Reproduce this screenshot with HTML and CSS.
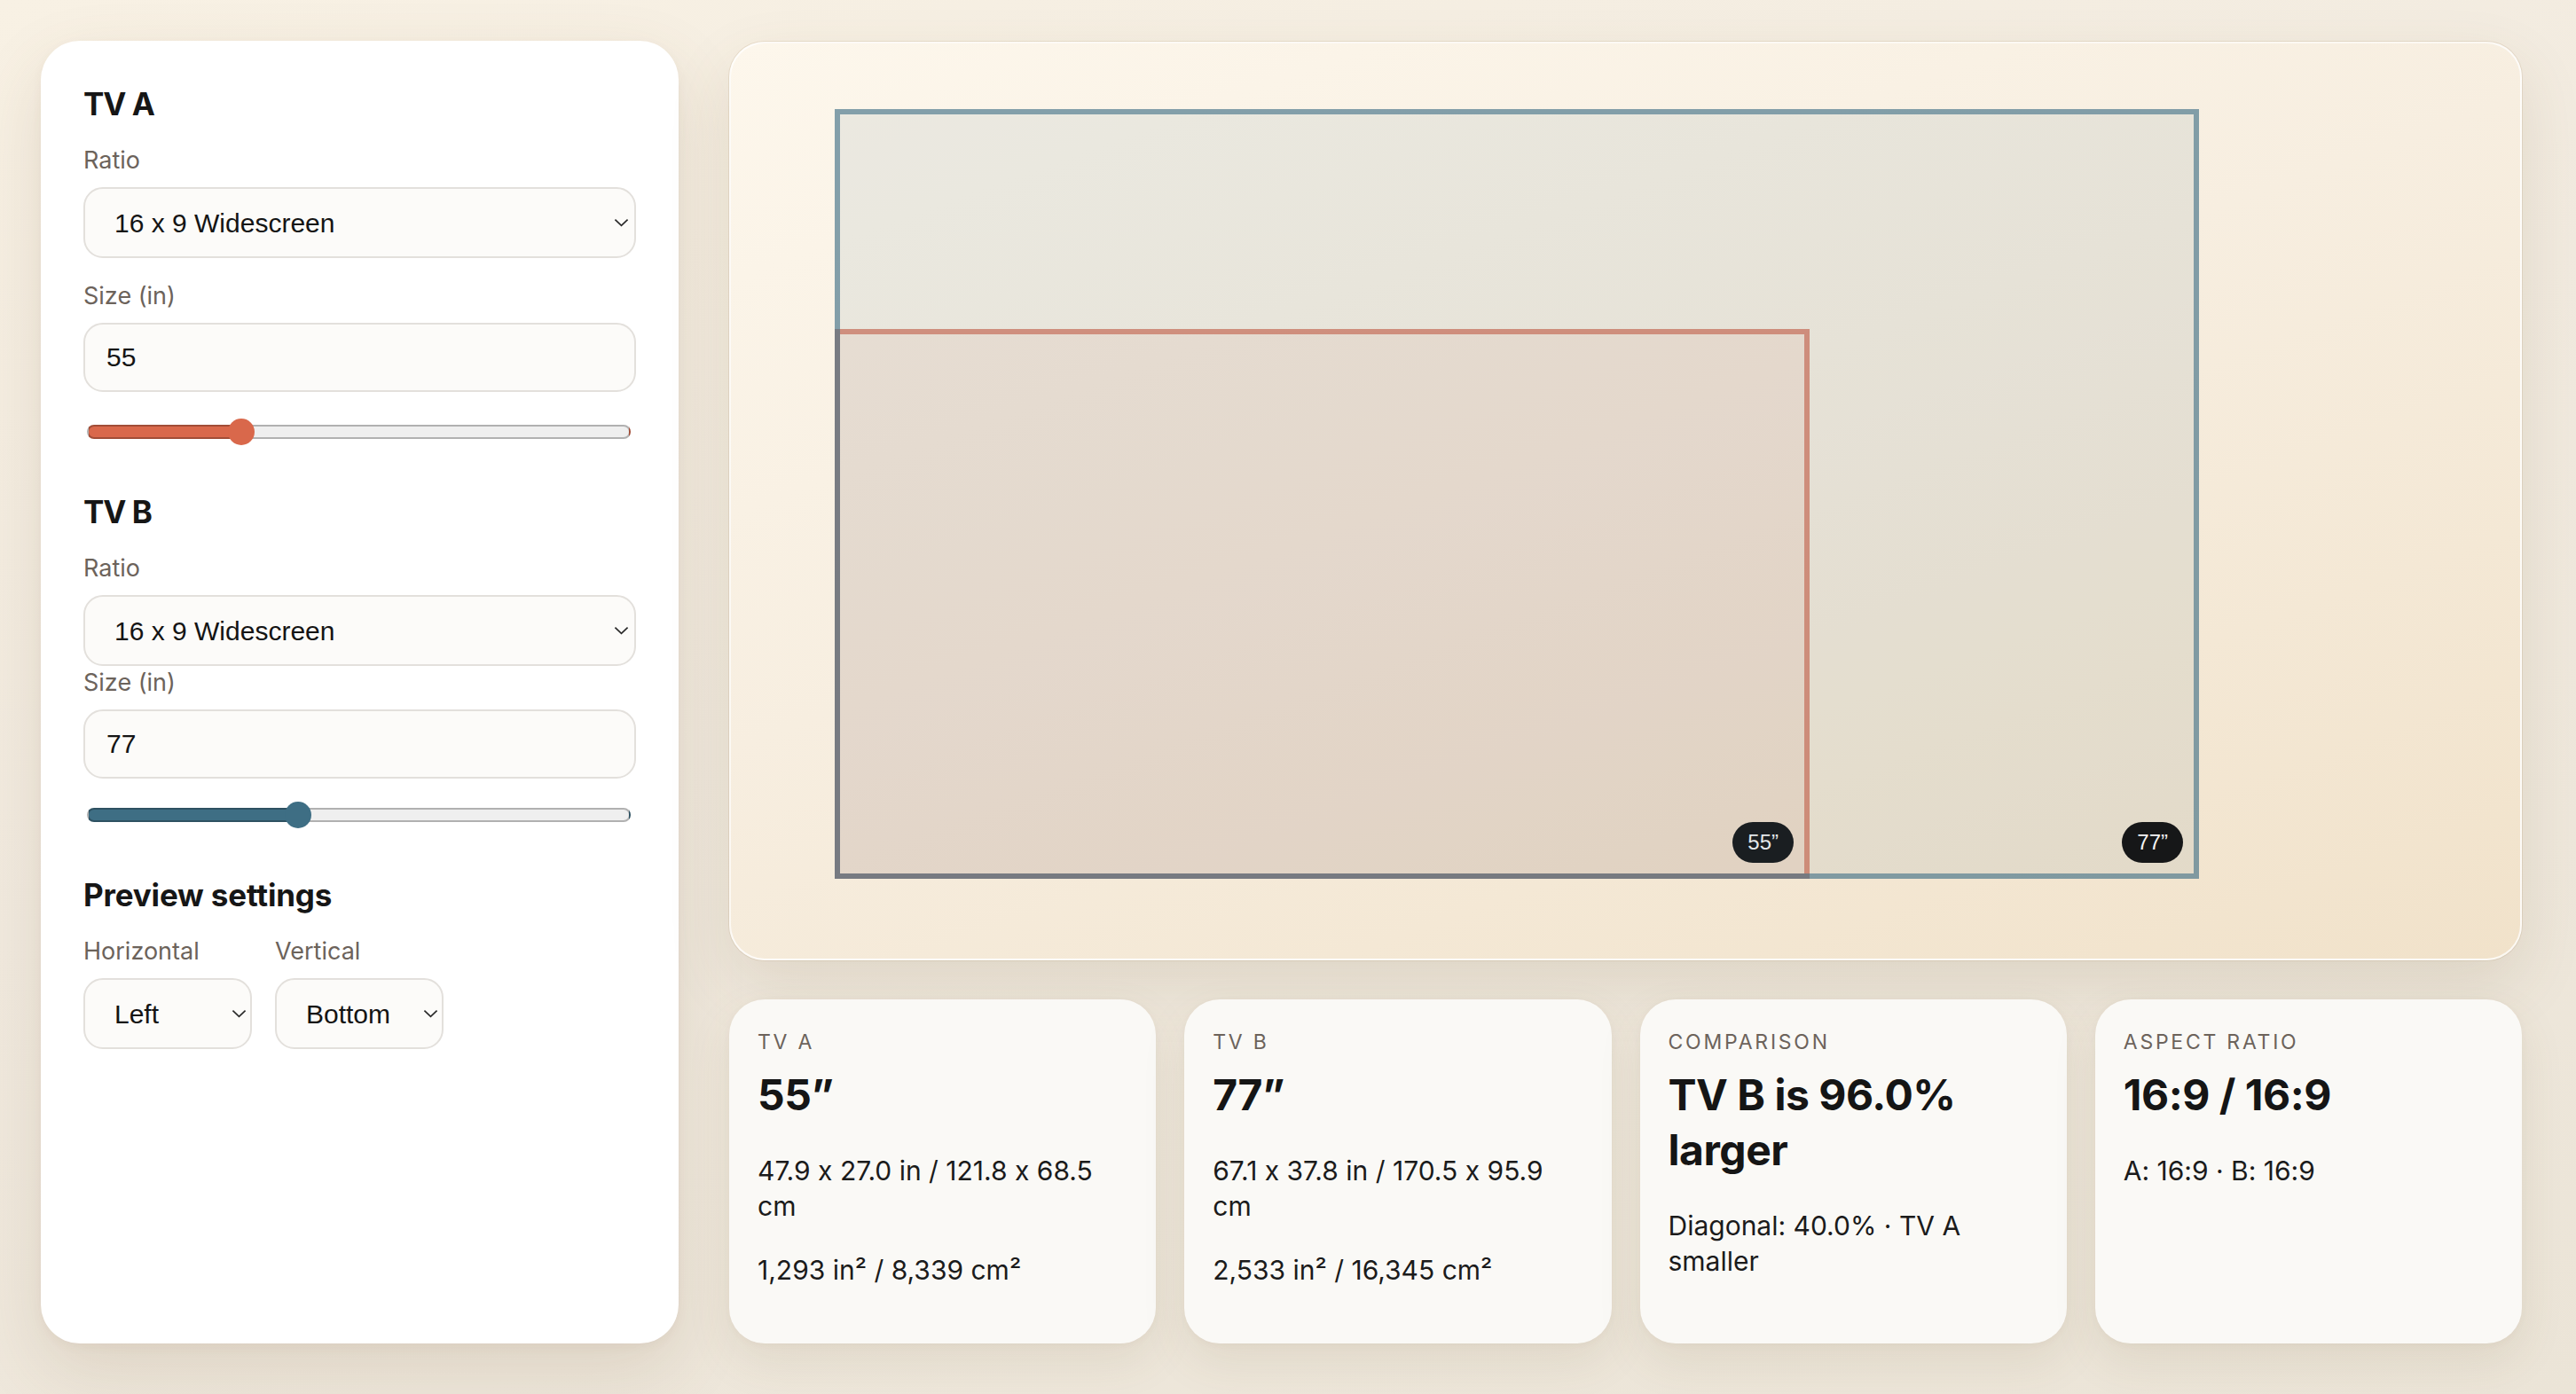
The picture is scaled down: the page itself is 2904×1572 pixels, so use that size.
FILE: index.html
```html
<!DOCTYPE html>
<html lang="en">
<head>
<meta charset="utf-8">
<title>TV Size Comparison</title>
<link rel="stylesheet" href="styles.css">
</head>
<body>
<aside class="panel">
  <h2 class="panel-title">TV A</h2>
  <label class="field-label">Ratio</label>
  <div class="select-wrap">
    <select class="control select"><option>16 x 9 Widescreen</option></select>
    <svg class="chev" viewBox="0 0 18 10" width="18" height="10"><polyline points="1.5,1.5 9,8.5 16.5,1.5" fill="none" stroke="#2a2a2a" stroke-width="1.8"/></svg>
  </div>
  <label class="field-label gap-lg">Size (in)</label>
  <input class="control text" type="text" value="55">
  <input class="range range-a" type="range" min="1" max="200" value="55" style="--p: 28.2%">

  <h2 class="panel-title section">TV B</h2>
  <label class="field-label">Ratio</label>
  <div class="select-wrap">
    <select class="control select"><option>16 x 9 Widescreen</option></select>
    <svg class="chev" viewBox="0 0 18 10" width="18" height="10"><polyline points="1.5,1.5 9,8.5 16.5,1.5" fill="none" stroke="#2a2a2a" stroke-width="1.8"/></svg>
  </div>
  <label class="field-label gap-sm">Size (in)</label>
  <input class="control text" type="text" value="77">
  <input class="range range-b" type="range" min="1" max="200" value="77" style="--p: 38.8%">

  <h3 class="panel-title sub section">Preview settings</h3>
  <div class="pair">
    <div class="pair-col">
      <label class="field-label">Horizontal</label>
      <div class="select-wrap">
        <select class="control select"><option>Left</option></select>
        <svg class="chev" viewBox="0 0 18 10" width="18" height="10"><polyline points="1.5,1.5 9,8.5 16.5,1.5" fill="none" stroke="#2a2a2a" stroke-width="1.8"/></svg>
      </div>
    </div>
    <div class="pair-col">
      <label class="field-label">Vertical</label>
      <div class="select-wrap">
        <select class="control select"><option>Bottom</option></select>
        <svg class="chev" viewBox="0 0 18 10" width="18" height="10"><polyline points="1.5,1.5 9,8.5 16.5,1.5" fill="none" stroke="#2a2a2a" stroke-width="1.8"/></svg>
      </div>
    </div>
  </div>
</aside>

<main class="main">
  <section class="preview">
    <div class="stage">
      <div class="screen screen-a"><span class="badge">55”</span></div>
      <div class="screen screen-b"><span class="badge">77”</span></div>
    </div>
  </section>

  <section class="stats">
    <div class="card">
      <div class="card-label">TV A</div>
      <div class="card-big">55”</div>
      <p class="card-text">47.9 x 27.0 in / 121.8 x 68.5 cm</p>
      <p class="card-text">1,293 in² / 8,339 cm²</p>
    </div>
    <div class="card">
      <div class="card-label">TV B</div>
      <div class="card-big">77”</div>
      <p class="card-text">67.1 x 37.8 in / 170.5 x 95.9 cm</p>
      <p class="card-text">2,533 in² / 16,345 cm²</p>
    </div>
    <div class="card">
      <div class="card-label">Comparison</div>
      <div class="card-big">TV B is 96.0% larger</div>
      <p class="card-text">Diagonal: 40.0% · TV A smaller</p>
    </div>
    <div class="card">
      <div class="card-label">Aspect ratio</div>
      <div class="card-big">16:9 / 16:9</div>
      <p class="card-text">A: 16:9 · B: 16:9</p>
    </div>
  </section>
</main>
</body>
</html>
```

FILE: styles.css
```css
* { box-sizing: border-box; }

html, body { height: 100%; }

body {
  margin: 0;
  height: 1572px;
  padding: 46px 61px 57px 46px;
  display: grid;
  grid-template-columns: 719px 1fr;
  gap: 57px;
  font-family: "Inter", "Noto Sans", sans-serif;
  font-feature-settings: "calt" 0;
  color: #171717;
  background: linear-gradient(165deg, #f8f1e4 0%, #f1eadf 45%, #ebe4d7 100%);
  overflow: hidden;
}

/* ---------- left panel ---------- */
.panel {
  background: #ffffff;
  border-radius: 44px;
  padding: 50px 48px 48px 48px;
  display: flex;
  flex-direction: column;
  box-shadow: 0 30px 80px rgba(110, 85, 50, 0.14), 0 4px 12px rgba(110, 85, 50, 0.05);
}

.panel-title {
  margin: 0;
  font-size: 35px;
  line-height: 42px;
  font-weight: 700;
  letter-spacing: -0.03em;
  color: #161616;
}
.panel-title.sub {
  font-size: 35px;
  letter-spacing: -0.005em;
}
.panel-title.section { margin-top: 54px; }

.field-label {
  display: block;
  margin-top: 26px;
  margin-bottom: 13px;
  font-size: 27px;
  line-height: 34px;
  color: #6c635b;
}
.field-label.gap-sm { margin-top: 2px; }

.select-wrap { position: relative; }

.control {
  display: block;
  width: 100%;
  margin: 0;
  font-family: "Liberation Sans", Arial, sans-serif;
  font-size: 30px;
  color: #141414;
  background: #fcfbf9;
  border: 2px solid #e3e0dc;
  border-radius: 22px;
  outline: none;
}

.select {
  -webkit-appearance: none;
  appearance: none;
  height: 80px;
  padding: 0 40px 0 33px;
}

.text {
  height: 78px;
  padding: 0 24px;
}

.chev {
  position: absolute;
  right: 8px;
  top: 50%;
  width: 17px;
  height: 10px;
  margin-top: -5px;
  pointer-events: none;
}

/* ---------- range sliders ---------- */
.range {
  -webkit-appearance: none;
  appearance: none;
  display: block;
  width: calc(100% - 10px);
  height: 30px;
  margin: 30px 5px 0 4px;
  padding: 0;
  background: transparent;
}
.range-b { margin-top: 26px; }

.range::-webkit-slider-runnable-track {
  box-sizing: border-box;
  height: 16px;
  border-radius: 8px;
  border: 2px solid rgba(0, 0, 0, 0.26);
  background: linear-gradient(to right, var(--c) 0, var(--c) var(--p), #efefef var(--p), #efefef 100%);
}
.range::-webkit-slider-thumb {
  -webkit-appearance: none;
  appearance: none;
  width: 30px;
  height: 30px;
  margin-top: -9px;
  border-radius: 50%;
  border: none;
  background: var(--c);
}
.range-a { --c: #d9684b; }
.range-b { --c: #3e6e84; }

.pair {
  display: flex;
  gap: 26px;
}
.pair-col { width: 190px; }
.pair .select { padding-right: 30px; }
.pair .chev { right: 6px; }

/* ---------- right side ---------- */
.main {
  display: flex;
  flex-direction: column;
  gap: 44px;
  min-width: 0;
}

.preview {
  flex: 1;
  margin-top: 1px;
  border-radius: 40px;
  border: 2px solid rgba(255, 255, 255, 0.75);
  background: linear-gradient(160deg, #fdf7ec 0%, #f7eee0 45%, #f1e2ca 100%);
  box-shadow: 0 0 0 1px rgba(160, 130, 90, 0.16), 0 28px 70px rgba(110, 85, 50, 0.13);
  padding: 74px 0 0 117px;
}

.stage {
  position: relative;
  width: 1538px;
  height: 868px;
}

.screen {
  position: absolute;
  left: 0;
  bottom: 0;
}
.screen-a {
  width: 1099px;
  height: 620px;
  border: 6px solid rgba(205, 95, 70, 0.62);
  background: rgba(217, 106, 77, 0.08);
}
.screen-b {
  width: 1538px;
  height: 868px;
  border: 6px solid rgba(61, 110, 133, 0.6);
  background: rgba(61, 110, 133, 0.09);
}

.badge {
  position: absolute;
  right: 12px;
  bottom: 12px;
  height: 46px;
  padding: 0 17px;
  display: flex;
  align-items: center;
  border-radius: 23px;
  background: #161718;
  color: #f4f4f4;
  font-family: "Liberation Sans", Arial, sans-serif;
  font-size: 24px;
}

/* ---------- stat cards ---------- */
.stats {
  height: 388px;
  display: grid;
  grid-template-columns: repeat(4, 1fr);
  gap: 32px;
}

.card {
  background: #faf9f6;
  border-radius: 40px;
  padding: 33px 32px 32px 32px;
  box-shadow: 0 20px 50px rgba(110, 85, 50, 0.10), 0 2px 8px rgba(110, 85, 50, 0.04);
}

.card-label {
  font-size: 23px;
  line-height: 30px;
  letter-spacing: 0.12em;
  text-transform: uppercase;
  color: #6c635b;
}

.card-big {
  margin-top: 14px;
  font-size: 48px;
  line-height: 62px;
  font-weight: 700;
  letter-spacing: -0.01em;
  color: #151515;
}

.card-text {
  margin: 34px 0 0 0;
  font-size: 30px;
  line-height: 40px;
  color: #1b1b1b;
}
.card-text + .card-text { margin-top: 32px; }
```
